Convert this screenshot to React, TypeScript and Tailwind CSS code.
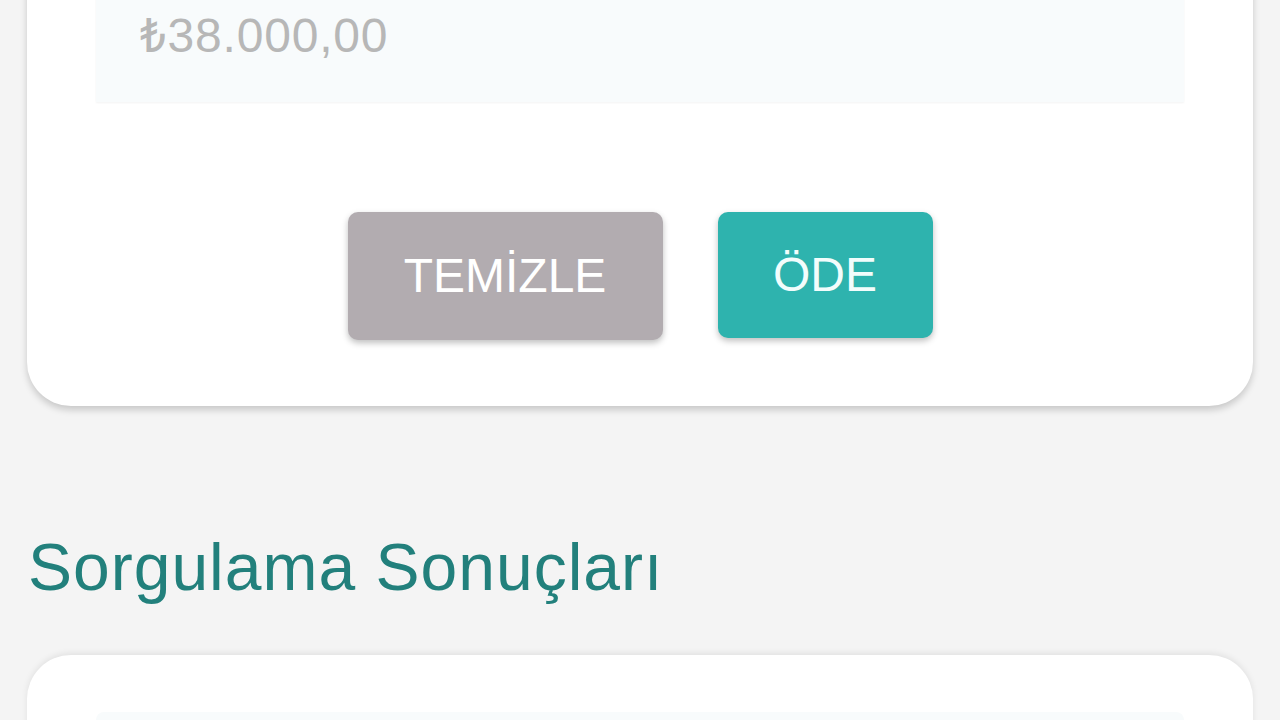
export default function App() {
  return (
    <div className="h-[720px] overflow-hidden bg-[#f4f4f4] font-['Liberation_Sans','Roboto',sans-serif]">
      {/* payment card, top scrolled out of view */}
      <div className="mx-[27px] -mt-[80px] rounded-[44px] bg-white px-[69px] pb-[66px] shadow-[0_4px_7px_rgba(0,0,0,0.18)]">
        <div className="flex h-[182px] flex-col justify-end bg-[#f8fbfc] pb-[42px] pl-[44px] shadow-[0_1px_2px_rgba(0,0,0,0.05)]">
          <span className="text-[48px] leading-none tracking-[0.8px] text-[#b7b7b7]">₺38.000,00</span>
        </div>
        <div className="mt-[110px] flex justify-center gap-[55px]">
          <button className="h-[128px] w-[315px] rounded-[10px] bg-[#b2acb0] text-[48px] leading-none text-white shadow-[0_3px_6px_rgba(0,0,0,0.25)]">
            TEMİZLE
          </button>
          <button className="h-[126px] w-[215px] rounded-[10px] bg-[#2eb3ae] text-[48px] leading-none text-[#f2fdfc] shadow-[0_3px_6px_rgba(0,0,0,0.25)]">
            ÖDE
          </button>
        </div>
      </div>

      <h2 className="mt-[128px] pl-[28px] text-[66px] leading-none font-normal tracking-[1px] text-[#22807c]">
        Sorgulama Sonuçları
      </h2>

      {/* results card */}
      <div className="mx-[27px] mt-[55px] h-[300px] rounded-[44px] bg-white px-[69px] pt-[57px] shadow-[0_-2px_6px_rgba(0,0,0,0.08)]">
        <div className="h-[120px] rounded-[8px] bg-[#f8fbfc]" />
      </div>
    </div>
  );
}
